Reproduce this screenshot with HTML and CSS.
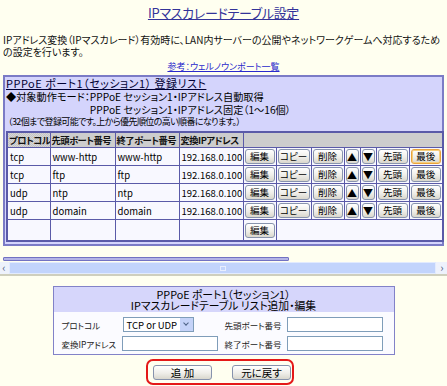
FILE: index.html
```html
<!DOCTYPE html>
<html lang="ja">
<head>
    <meta charset="UTF-8">
    <title>IPマスカレードテーブル設定</title>
    <link rel="stylesheet" href="styles.css">
</head>
<body>
<h1 class="title">IPマスカレードテーブル設定</h1>
<p class="lead">IPアドレス変換（IPマスカレード）有効時に、LAN内サーバーの公開やネットワークゲームへ対応するための設定を行います。</p>
<p class="ref"><a href="#">参考：ウェルノウンポート一覧</a></p>

<div class="list-box">
    <div class="list-title">PPPoE ポート1（セッション1） 登録リスト</div>
    <dl class="mode">
        <dt>◆対象動作モード：</dt>
        <dd>PPPoE セッション1・IPアドレス自動取得</dd>
        <dd>PPPoE セッション1・IPアドレス固定（1〜16個）</dd>
    </dl>
    <div class="note">（32個まで登録可能です。上から優先順位の高い順番になります。）</div>

    <table class="list">
        <colgroup>
            <col style="width: 43px"><col style="width: 65px"><col style="width: 64px"><col style="width: 64px">
            <col style="width: 33px"><col style="width: 35px"><col style="width: 33px">
            <col style="width: 16px"><col style="width: 16px"><col style="width: 33px"><col style="width: 34px">
        </colgroup>
        <tr>
            <th>プロトコル</th><th>先頭ポート番号</th><th>終了ポート番号</th><th>変換IPアドレス</th><th colspan="7"></th>
        </tr>
        <tr>
            <td>tcp</td><td>www-http</td><td>www-http</td><td>192.168.0.100</td>
            <td class="btn"><button>編集</button></td><td class="btn"><button>コピー</button></td><td class="btn"><button>削除</button></td>
            <td class="btn"><button class="arrow">▲</button></td><td class="btn"><button class="arrow">▼</button></td>
            <td class="btn"><button>先頭</button></td><td class="btn"><button class="hover">最後</button></td>
        </tr>
        <tr>
            <td>tcp</td><td>ftp</td><td>ftp</td><td>192.168.0.100</td>
            <td class="btn"><button>編集</button></td><td class="btn"><button>コピー</button></td><td class="btn"><button>削除</button></td>
            <td class="btn"><button class="arrow">▲</button></td><td class="btn"><button class="arrow">▼</button></td>
            <td class="btn"><button>先頭</button></td><td class="btn"><button>最後</button></td>
        </tr>
        <tr>
            <td>udp</td><td>ntp</td><td>ntp</td><td>192.168.0.100</td>
            <td class="btn"><button>編集</button></td><td class="btn"><button>コピー</button></td><td class="btn"><button>削除</button></td>
            <td class="btn"><button class="arrow">▲</button></td><td class="btn"><button class="arrow">▼</button></td>
            <td class="btn"><button>先頭</button></td><td class="btn"><button>最後</button></td>
        </tr>
        <tr>
            <td>udp</td><td>domain</td><td>domain</td><td>192.168.0.100</td>
            <td class="btn"><button>編集</button></td><td class="btn"><button>コピー</button></td><td class="btn"><button>削除</button></td>
            <td class="btn"><button class="arrow">▲</button></td><td class="btn"><button class="arrow">▼</button></td>
            <td class="btn"><button>先頭</button></td><td class="btn"><button>最後</button></td>
        </tr>
        <tr class="new-row">
            <td></td><td></td><td></td><td></td>
            <td class="btn"><button>編集</button></td><td colspan="6"></td>
        </tr>
    </table>
</div>

<div class="frame-edge"></div>
<div class="hscroll">
    <span class="sb-btn">‹</span>
    <span class="sb-thumb"><i></i></span>
    <span class="sb-btn">›</span>
</div>

<form class="edit-box">
    <div class="edit-head">PPPoE ポート1（セッション1）<br>IPマスカレードテーブル リスト追加・編集</div>
    <div class="edit-body">
        <label>プロトコル</label>
        <div class="select"><span>TCP or UDP</span><i class="drop"></i></div>
        <label>先頭ポート番号</label>
        <input type="text">
        <label>変換IPアドレス</label>
        <input type="text">
        <label>終了ポート番号</label>
        <input type="text">
    </div>
</form>

<div class="actions">
    <div class="actions-frame">
        <button class="wide">追 加</button>
        <button class="wide">元に戻す</button>
    </div>
</div>
</body>
</html>
```

FILE: styles.css
```css
body { margin: 0; background: #fffff0; color: #000; font-family: "Noto Sans CJK JP", sans-serif; font-size: 10px; font-feature-settings: "palt"; }

.title { margin: 5px 0 0; font-size: 13px; line-height: 16px; letter-spacing: -0.3px; font-weight: normal; text-align: center; color: #333399; text-decoration: underline; }
.lead { margin: 13px 3px 0; line-height: 12px; color: #111; }
.ref { margin: 3px 0 0; text-align: center; font-size: 9px; line-height: 12px; }
.ref a { color: #2a2acc; }

/* registered list */
.list-box { margin: 2px 3px 0; padding: 0 1px 2px; border: 2px solid #7b7bc6; background: #d4d4fc; }
.list-title { font-size: 11px; line-height: 12px; letter-spacing: 0.5px; color: #000033; text-decoration: underline; white-space: nowrap; }
.mode { display: grid; grid-template-columns: auto 1fr; margin: 1px 0 0; font-size: 10.2px; line-height: 13px; white-space: nowrap; }
.mode dt { grid-row: span 2; }
.mode dd { margin: 0; }
.note { padding-left: 2px; font-size: 9px; line-height: 12px; letter-spacing: -0.6px; white-space: nowrap; }

.list { margin-top: 3px; width: 436px; table-layout: fixed; border-collapse: collapse; border: 2px solid #5a5aa8; background: #f8f8ff; line-height: 12px; }
.list th, .list td { padding: 0 2px; border: 1px solid #5a5aa8; font-size: 9.5px; text-align: left; white-space: nowrap; overflow: hidden; }
.list th { padding: 1px 1px; font-weight: bold; font-size: 9.3px; letter-spacing: -0.5px; color: #111; background: repeating-conic-gradient(#c4c4c4 0 25%, #d6d6d6 0 50%) 0 0 / 2px 2px; }
.list td.btn { padding: 1px; }
.list .new-row td { height: 18px; }

button { display: block; width: 100%; height: 15px; padding: 0; font: inherit; font-size: 9.5px; line-height: 13px; color: #000; white-space: nowrap; border: 1px solid #8793ad; border-radius: 3px; background: linear-gradient(#ffffff, #efeee9 55%, #d9d7cd); }
button.arrow { font-size: 10px; }
button.hover { border-color: #e8a33c; box-shadow: inset 0 0 0 1px #f7cf7c; }

/* frame bottom with horizontal scrollbar */
.frame-edge { width: 284px; height: 2px; margin: 11px 0 0 3px; border: 1px solid #7272c2; border-radius: 1px; background: #b4b4e6; }
.hscroll { display: flex; height: 12px; margin-top: 1px; border-bottom: 2px solid #cfcfbd; background: #eef2fc; }
.sb-btn { width: 8px; font-size: 11px; line-height: 11px; color: #4d5a80; text-align: center; }
.sb-btn:last-child { width: 10px; }
.sb-thumb { flex: 1; display: flex; align-items: center; justify-content: center; margin: 0 1px; border: 1px solid #e2ebfe; background: #c2d4fc; }
.sb-thumb i { width: 4px; height: 3px; border: 1px solid #e8eefe; }

/* add / edit form */
.edit-box { width: 340px; margin: 10px auto 0; border: 1px solid #8282c8; background: #fbfbff; }
.edit-head { padding: 2px 0 2px; font-size: 10.8px; line-height: 10.5px; text-align: center; background: #d6d6fb; }
.edit-body { display: grid; grid-template-columns: 60px 96px 69px 96px; row-gap: 4px; align-items: center; padding: 5px 0 3px 8px; font-size: 8.5px; line-height: 12px; color: #222; white-space: nowrap; }
.edit-body label:nth-of-type(even) { padding-left: 7px; }
.edit-body input { width: 96px; height: 15px; box-sizing: border-box; border: 1px solid #7f9db9; background: #fff; }
.select { display: flex; align-items: center; width: 71px; height: 15px; box-sizing: border-box; margin-left: 1px; border: 1px solid #7f9db9; background: #fff; }
.select span { flex: 1; padding-left: 3px; font-size: 9.5px; line-height: 12px; color: #000; }
.drop { position: relative; width: 13px; height: 13px; background: #c5d3f8; }
.drop::after { content: ""; position: absolute; left: 4px; top: 3px; width: 3px; height: 3px; border: solid #4d6185; border-width: 0 1.5px 1.5px 0; transform: rotate(45deg); }

.actions { display: flex; justify-content: center; padding-right: 7px; }
.actions-frame { display: flex; gap: 20px; margin-top: 4px; padding: 4px 1px 3px 5px; border: 2px solid #e41818; border-radius: 7px; }
.actions-frame button { width: 59px; font-size: 10.5px; }
```
